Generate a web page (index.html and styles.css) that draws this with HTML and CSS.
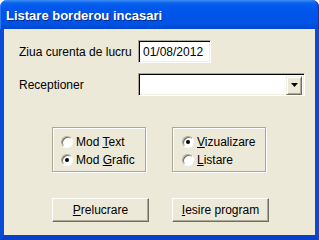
FILE: index.html
```html
<!DOCTYPE html>
<html lang="ro">
<head>
    <meta charset="UTF-8">
    <title>Listare borderou incasari</title>
    <link rel="stylesheet" href="styles.css">
</head>
<body>

    <div class="window">
        <!-- bara de titlu -->
        <div class="titlebar">
            <span class="title">Listare borderou incasari</span>
        </div>

        <div class="client">
            <div class="row">
                <span class="label">Ziua curenta de lucru</span>
                <div class="field date">01/08/2012</div>
            </div>

            <div class="row row-combo">
                <span class="label">Receptioner</span>
                <div class="field combo">
                    <span class="combo-btn">
                        <svg width="7" height="4" viewBox="0 0 7 4"><path d="M0 0h7L3.5 4z" fill="#000"/></svg>
                    </span>
                </div>
            </div>

            <!-- optiuni -->
            <div class="groups">
                <div class="group">
                    <div class="opt"><span class="radio"></span><span>Mod <u>T</u>ext</span></div>
                    <div class="opt"><span class="radio checked"></span><span>Mod <u>G</u>rafic</span></div>
                </div>
                <div class="group group-right">
                    <div class="opt"><span class="radio checked"></span><span><u>V</u>izualizare</span></div>
                    <div class="opt"><span class="radio"></span><span><u>L</u>istare</span></div>
                </div>
            </div>

            <div class="buttons">
                <button class="btn"><u>P</u>relucrare</button>
                <button class="btn"><u>I</u>esire program</button>
            </div>
        </div>
    </div>

</body>
</html>
```

FILE: styles.css
```css
body {
    margin: 0;
    padding: 0;
    font-family: "Liberation Sans", Arial, sans-serif;
    font-size: 12px;
    color: #000;
    background-color: #fff;
}

.window {
    width: 319px;
    height: 240px;
    display: flex;
    flex-direction: column;
}

.titlebar {
    height: 29px;
    flex-shrink: 0;
    box-sizing: border-box;
    padding-left: 6px;
    display: flex;
    align-items: center;
    border-radius: 7px 7px 0 0;
    background: linear-gradient(to bottom, #3d8ef5 0, #0a62ec 3px, #0058ee 7px, #0055e8 50%, #0052e2 85%, #0046cf 100%);
    box-shadow: inset 1px 0 0 #2a7af5, inset -1px 0 0 #0036b8;
}

.title {
    color: #fff;
    font-weight: bold;
    font-size: 13px;
    text-shadow: 1px 1px 0 #0a2a8a;
    margin-top: 2px;
}

.client {
    flex-grow: 1;
    background-color: #ece9d8;
    border-left: 4px solid #0a4ad8;
    border-right: 4px solid #0a4ad8;
    border-bottom: 5px solid #0a40c8;
    padding: 11px 0 0 15px;
}

.row {
    display: flex;
    align-items: center;
    height: 23px;
}

.row-combo {
    margin-top: 10px;
}

.label {
    width: 119px;
}

.field {
    box-sizing: border-box;
    height: 23px;
    background-color: #fff;
    border: 1px solid;
    border-color: #aca899 #fff #fff #aca899;
    box-shadow: inset 1px 1px 0 #000, inset -1px -1px 0 #f1efe2;
    display: flex;
    align-items: center;
}

.date {
    width: 73px;
    padding-left: 4px;
}

.combo {
    width: 167px;
    justify-content: flex-end;
    padding-right: 2px;
}

.combo-btn {
    box-sizing: border-box;
    width: 16px;
    height: 19px;
    margin-top: 1px;
    background-color: #ece9d8;
    border: 1px solid;
    border-color: #f1efe2 #716f64 #716f64 #f1efe2;
    box-shadow: inset 1px 1px 0 #fff, inset -1px -1px 0 #aca899;
    display: flex;
    align-items: center;
    justify-content: center;
}

.groups {
    display: flex;
    gap: 26px;
    margin: 31px 0 0 33px;
}

.group {
    box-sizing: border-box;
    width: 94px;
    height: 45px;
    border: 1px solid #aca899;
    box-shadow: 1px 1px 0 #fff, inset 1px 1px 0 #fff;
    padding: 5px 0 0 8px;
}

.group-right {
    padding-left: 9px;
}

.opt {
    display: flex;
    align-items: center;
    height: 18px;
    gap: 3px;
}

.radio {
    box-sizing: border-box;
    width: 12px;
    height: 12px;
    border-radius: 50%;
    background-color: #fff;
    border: 1px solid;
    border-color: #aca899 #fff #fff #aca899;
    box-shadow: inset 1px 1px 0 #716f64;
    display: flex;
    align-items: center;
    justify-content: center;
}

.radio.checked::after {
    content: "";
    width: 4px;
    height: 4px;
    border-radius: 50%;
    background-color: #000;
}

.buttons {
    display: flex;
    gap: 23px;
    margin: 26px 0 0 33px;
}

.btn {
    box-sizing: border-box;
    width: 97px;
    height: 24px;
    padding: 0;
    font-family: "Liberation Sans", Arial, sans-serif;
    font-size: 12px;
    color: #000;
    background-color: #ece9d8;
    border: 1px solid;
    border-color: #fff #716f64 #716f64 #fff;
    box-shadow: inset -1px -1px 0 #aca899;
}
```
